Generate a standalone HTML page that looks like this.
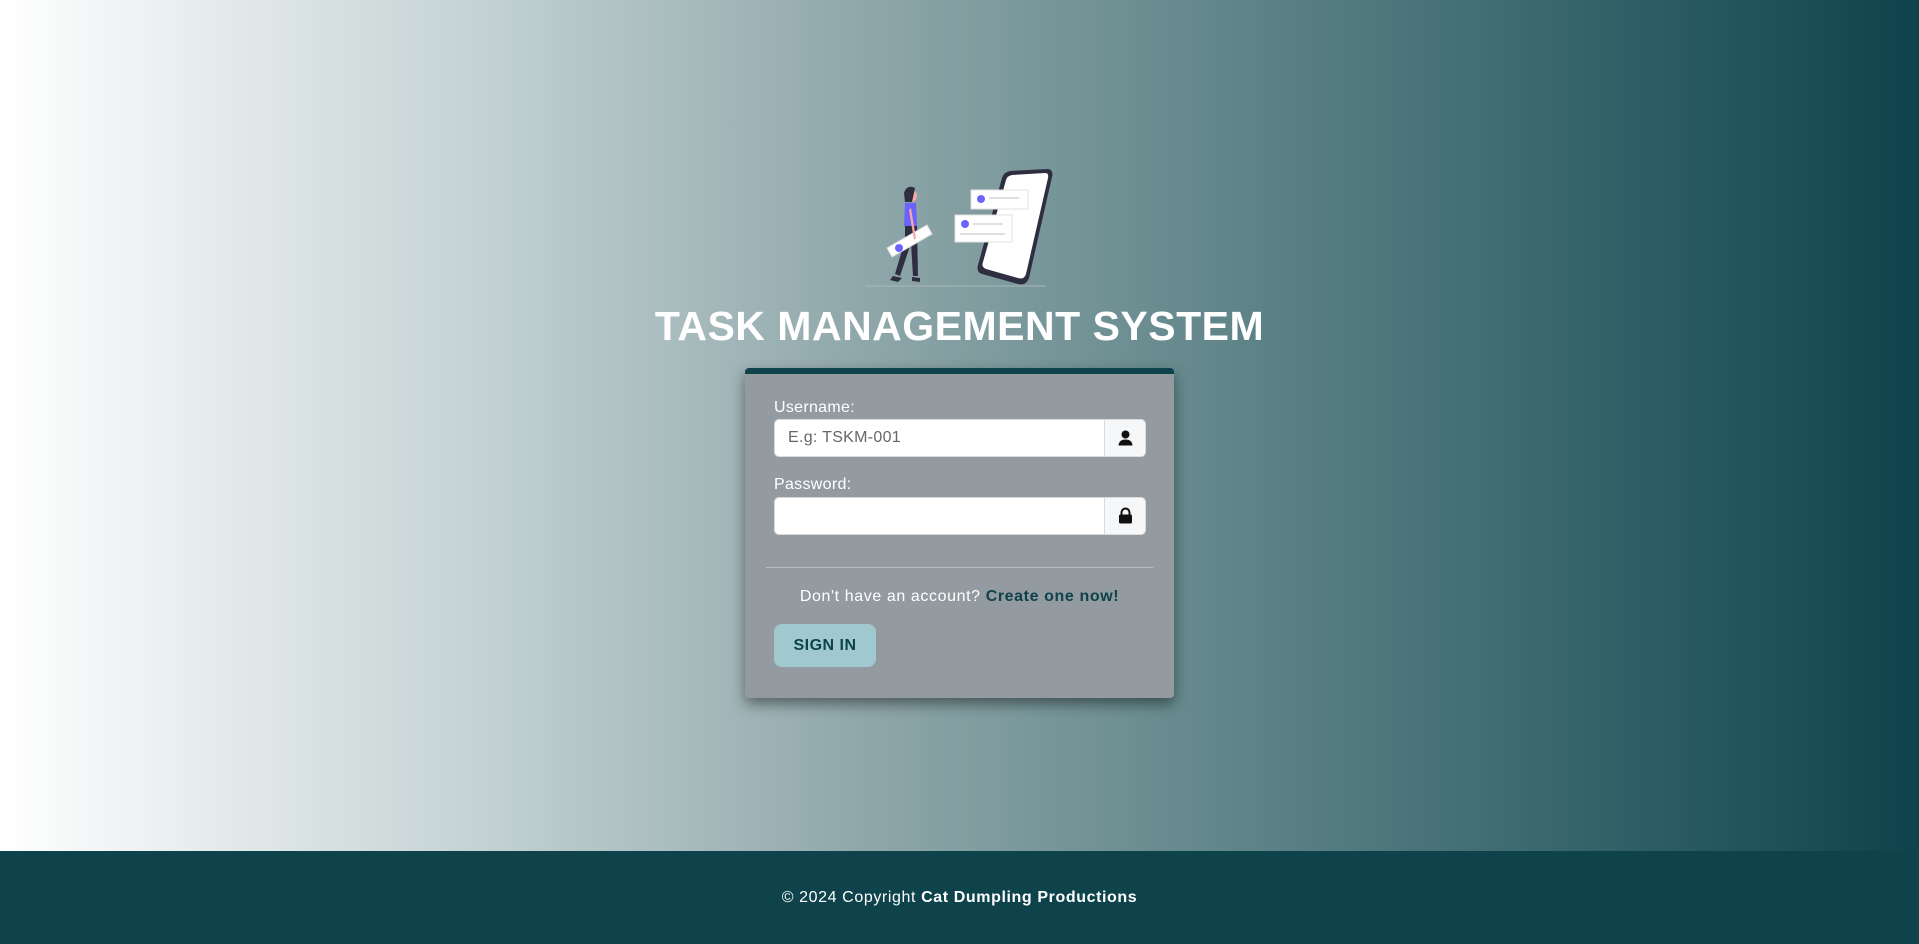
<!DOCTYPE html>
<html><head><meta charset="utf-8"><style>
*{box-sizing:border-box;margin:0;padding:0}
body{width:1919px;height:944px;overflow:hidden;font-family:"Liberation Sans",sans-serif;position:relative}
.bg{position:absolute;left:0;top:0;width:1919px;height:851px;background:linear-gradient(90deg,#ffffff 0%,#c4d2d3 25%,#8fa7aa 45%,#5e8488 65%,#2f5f66 85%,#0e434c 100%)}
.foot{position:absolute;left:0;top:851px;width:1919px;height:93px;background:#0e434c;color:#fff;font-size:16px;text-align:center;line-height:93px;letter-spacing:0.6px}
.title{position:absolute;left:0;width:1919px;top:303px;text-align:center;color:#fff;font-weight:bold;font-size:41px;letter-spacing:0.5px}
.card{position:absolute;left:745px;top:368px;width:429px;height:330px;background:#939aa0;border-top:6px solid #0e434c;border-radius:4px;box-shadow:0 6px 14px rgba(0,0,0,.45)}
.lbl{position:absolute;left:29px;color:#fff;font-size:16px;letter-spacing:0.3px}
.inp{position:absolute;left:29px;width:372px;height:38px;background:#fff;border:1px solid #d8dbde;border-radius:5px}
.add{position:absolute;right:0;top:0;width:41px;height:36px;background:#f6f7f8;border-left:1px solid #d8dbde;border-radius:0 5px 5px 0}
.ph{position:absolute;left:13px;top:9px;font-size:16px;color:#666;letter-spacing:0.3px}
hr{position:absolute;left:21px;width:387px;top:193px;border:0;border-top:1px solid #b6bcc1}
.txt{position:absolute;left:0;width:100%;top:214px;text-align:center;color:#fff;font-size:16px;letter-spacing:0.6px}
.txt b{color:#0e434c}
.btn{position:absolute;left:29px;top:250px;width:102px;height:43px;background:#a0c9cf;border-radius:8px;color:#0e434c;font-weight:bold;font-size:16px;text-align:center;line-height:43px;letter-spacing:0.5px}
</style></head><body>
<div class="bg"></div>
<svg style="position:absolute;left:862px;top:168px" width="195" height="120" viewBox="0 0 195 120">
<line x1="4" y1="118" x2="184" y2="118" stroke="#a9b7ba" stroke-width="1"/>
<path d="M148 3 L185 1 Q192 1 190 9 L167 110 Q164 118 156 116 L120 106 Q114 104 116 97 L140 10 Q142 4 148 3Z" fill="#2f2e41"/>
<path d="M150 7 L183 5 Q187 5 186 10 L164 106 Q162 112 156 110 L124 101 Q119 99 121 94 L144 12 Q145 8 150 7Z" fill="#fff"/>
<rect x="109" y="22" width="57" height="19" fill="#fff" stroke="#e0e0e0"/>
<circle cx="119" cy="31" r="4" fill="#6c63ff"/>
<rect x="127" y="29" width="30" height="2" fill="#e0e0e0"/>
<rect x="93" y="47" width="57" height="27" fill="#fff" stroke="#e0e0e0"/>
<circle cx="103" cy="56" r="4" fill="#6c63ff"/>
<rect x="111" y="55" width="30" height="2" fill="#e0e0e0"/>
<rect x="98" y="65" width="45" height="2" fill="#e0e0e0"/>
<circle cx="49" cy="28" r="6" fill="#f9a8a8"/>
<path d="M42 25 Q45 16 53 20 L50 34 L43 34Z" fill="#2f2e41"/>
<path d="M43 35 L54 35 L55 58 L42 58Z" fill="#6c63ff"/>
<path d="M43 58 L55 58 L56 108 L51 108 L49 75 L38 108 L33 106 L43 72Z" fill="#2f2e41"/>
<path d="M25 80 L65 57 L70 66 L30 89Z" fill="#fff" stroke="#ddd"/>
<circle cx="37" cy="80" r="4" fill="#6c63ff"/>
<path d="M49 40 L54 70 L52 72 L47 42Z" fill="#f9a8a8"/>
<path d="M31 108 L40 110 L36 114 L28 112Z" fill="#2f2e41"/>
<path d="M50 109 L58 110 L58 114 L50 113Z" fill="#2f2e41"/>
</svg>
<div class="title">TASK MANAGEMENT SYSTEM</div>
<div class="card">
<div class="lbl" style="top:25px">Username:</div>
<div class="inp" style="top:45px"><span class="ph">E.g: TSKM-001</span><div class="add">
<svg style="position:absolute;left:13px;top:10px" width="15" height="16" viewBox="0 0 15 16"><circle cx="7.5" cy="4.5" r="4" fill="#111"/><path d="M0.5 15.5 Q1 9.5 7.5 9.5 Q14 9.5 14.5 15.5Z" fill="#111"/></svg></div></div>
<div class="lbl" style="top:102px">Password:</div>
<div class="inp" style="top:123px"><div class="add">
<svg style="position:absolute;left:13px;top:9px" width="15" height="17" viewBox="0 0 15 17"><path d="M3.5 8 V5.5 A4 4 0 0 1 11.5 5.5 V8" fill="none" stroke="#111" stroke-width="2"/><rect x="1" y="7.5" width="13" height="9" rx="1.5" fill="#111"/></svg></div></div>
<hr>
<div class="txt">Don't have an account? <b>Create one now!</b></div>
<div class="btn">SIGN IN</div>
</div>
<div class="foot">© 2024 Copyright <b>Cat Dumpling Productions</b></div>
</body></html>
